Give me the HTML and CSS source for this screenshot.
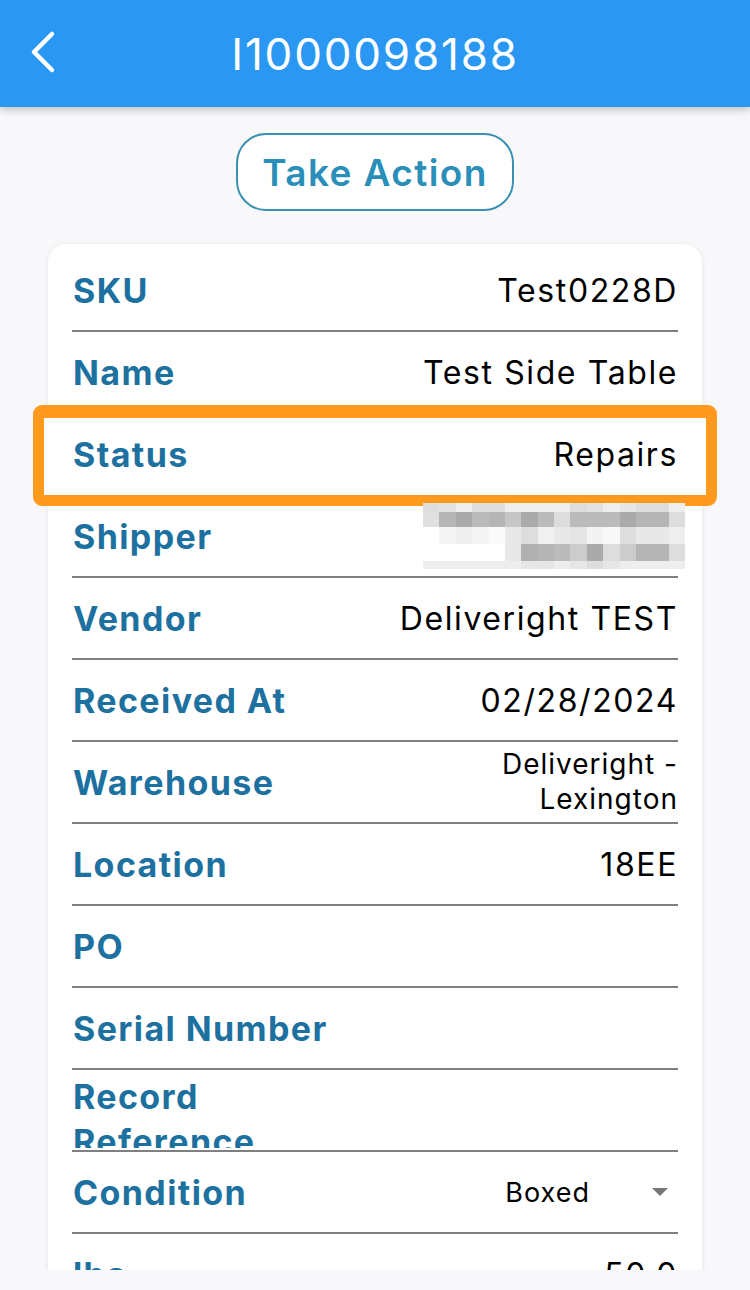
FILE: index.html
```html
<!DOCTYPE html>
<html lang="en">
<head>
    <meta charset="UTF-8">
    <meta name="viewport" content="width=device-width, initial-scale=1.0">
    <title>I1000098188</title>
    <link rel="stylesheet" href="styles.css">
</head>
<body>
    <header class="top-bar">
        <a class="back-btn" href="#">
            <svg width="40" height="50" viewBox="0 0 40 50">
                <polyline points="24,6 6,24 24,42" fill="none" stroke="#fff" stroke-width="4.5" stroke-linecap="round" stroke-linejoin="round"/>
            </svg>
        </a>
        <h1>I1000098188</h1>
    </header>

    <main class="scroll">
        <div class="action-wrap">
            <button class="action-btn">Take Action</button>
        </div>

        <section class="card">
            <div class="row">
                <span class="label">SKU</span>
                <span class="value">Test0228D</span>
            </div>
            <div class="row">
                <span class="label">Name</span>
                <span class="value">Test Side Table</span>
            </div>
            <div class="row highlight">
                <span class="mark"></span>
                <span class="label">Status</span>
                <span class="value">Repairs</span>
            </div>
            <div class="row">
                <span class="label">Shipper</span>
                <div class="mosaic"></div>
            </div>
            <div class="row">
                <span class="label">Vendor</span>
                <span class="value">Deliveright TEST</span>
            </div>
            <div class="row">
                <span class="label">Received At</span>
                <span class="value">02/28/2024</span>
            </div>
            <div class="row">
                <span class="label">Warehouse</span>
                <span class="value small">Deliveright -<br>Lexington</span>
            </div>
            <div class="row">
                <span class="label">Location</span>
                <span class="value">18EE</span>
            </div>
            <div class="row">
                <span class="label">PO</span>
                <span class="value"></span>
            </div>
            <div class="row">
                <span class="label">Serial Number</span>
                <span class="value"></span>
            </div>
            <div class="row clip">
                <span class="label">Record<br>Reference</span>
                <span class="value"></span>
            </div>
            <div class="row">
                <span class="label">Condition</span>
                <div class="picker">
                    <span>Boxed</span>
                    <svg width="16" height="8" viewBox="0 0 16 8"><polygon points="0,0 16,0 8,8" fill="#777"/></svg>
                </div>
            </div>
            <div class="row">
                <span class="label">lbs</span>
                <span class="value">50.0</span>
            </div>
        </section>
    </main>

    <script>
        // blurred shipper name (pixelated)
        const shades = [
            ['ddd','e2e2e2','eee','ddd','ddd','eee','eee','eee','eee','ddd','e2e2e2','eee','e6e6e6','ddd','ddd','eee'],
            ['e0e0e0','b5b5b5','aaa','bbb','b5b5b5','c6c6c6','aaa','bbb','ddd','bbb','bbb','bbb','aaa','b5b5b5','b5b5b5','ddd'],
            ['fff','f5f5f5','eee','f5f5f5','fafafa','e8e8e8','ddd','f0f0f0','e8e8e8','e5e5e5','f3f3f3','f8f8f8','ddd','e8e8e8','e8e8e8','eee'],
            ['fff','fff','fff','fff','fff','e8e8e8','b0b0b0','b5b5b5','bbb','ccc','aaa','ddd','ccc','b5b5b5','b5b5b5','ddd'],
            ['eee','eee','eee','eee','eee','eee','e6e6e6','e6e6e6','eee','e6e6e6','ddd','e6e6e6','eee','eee','eee','eee']
        ];

        document.querySelector('.mosaic').innerHTML = shades
            .map(row => row.map(c => `<i style="background:#${c}"></i>`).join(''))
            .join('');
    </script>
</body>
</html>
```

FILE: styles.css
```css
* {
    margin: 0;
    padding: 0;
    box-sizing: border-box;
}

body {
    width: 750px;
    height: 1290px;
    font-family: 'Inter', 'Roboto', 'Liberation Sans', sans-serif;
    background-color: #f8f8fa;
    color: #000;
    overflow: hidden;
}

.top-bar {
    position: relative;
    z-index: 2;
    height: 107px;
    background: #2a98f2;
    box-shadow: 0 3px 8px rgba(0,0,0,0.22);
    display: flex;
    align-items: center;
    justify-content: center;
}

.back-btn {
    position: absolute;
    left: 28px;
    top: 28px;
}

.top-bar h1 {
    color: #fff;
    font-size: 44px;
    font-weight: 400;
    letter-spacing: 1.8px;
}

.scroll {
    height: 1163px;
    overflow: hidden;
}

.action-wrap {
    display: flex;
    justify-content: center;
    padding-top: 26px;
}

.action-btn {
    width: 278px;
    height: 78px;
    border: 2px solid #3a90b2;
    border-radius: 30px;
    background: #fff;
    color: #2a8fb8;
    font-family: inherit;
    font-size: 37px;
    font-weight: 600;
    letter-spacing: 1.4px;
}

.card {
    margin: 33px 48px 0;
    padding: 6px 24px 0;
    background: #fff;
    border-radius: 18px;
    box-shadow: 0 1px 6px rgba(0,0,0,0.08);
}

.row {
    position: relative;
    height: 82px;
    display: flex;
    align-items: center;
    justify-content: space-between;
    border-bottom: 2px solid #808080;
}

.label {
    position: relative;
    width: 280px;
    color: #1d71a0;
    font-size: 34px;
    font-weight: 700;
    line-height: 45px;
    letter-spacing: 1.4px;
    padding-left: 1px;
}

.value {
    position: relative;
    text-align: right;
    font-size: 32px;
    letter-spacing: 1.6px;
}

.value.small {
    font-size: 28px;
    line-height: 35px;
    letter-spacing: 1px;
}

.highlight .mark {
    position: absolute;
    top: -9px;
    bottom: -12px;
    left: -39px;
    right: -39px;
    border: 11px solid #ff9a1f;
    border-top-width: 13px;
    border-radius: 9px;
    background: #fff;
}

.mosaic {
    width: 262px;
    height: 66px;
    margin-right: -7px;
    display: grid;
    grid-template-columns: repeat(16, 1fr);
    grid-template-rows: 9px 15px 17px 17px 8px;
}

.mosaic i {
    display: block;
}

.clip .label {
    align-self: flex-start;
    height: 74px;
    overflow: hidden;
    margin-top: 4px;
}

.picker {
    display: flex;
    align-items: center;
    gap: 62px;
    font-size: 27px;
    letter-spacing: 1px;
    margin-right: 10px;
}
```
